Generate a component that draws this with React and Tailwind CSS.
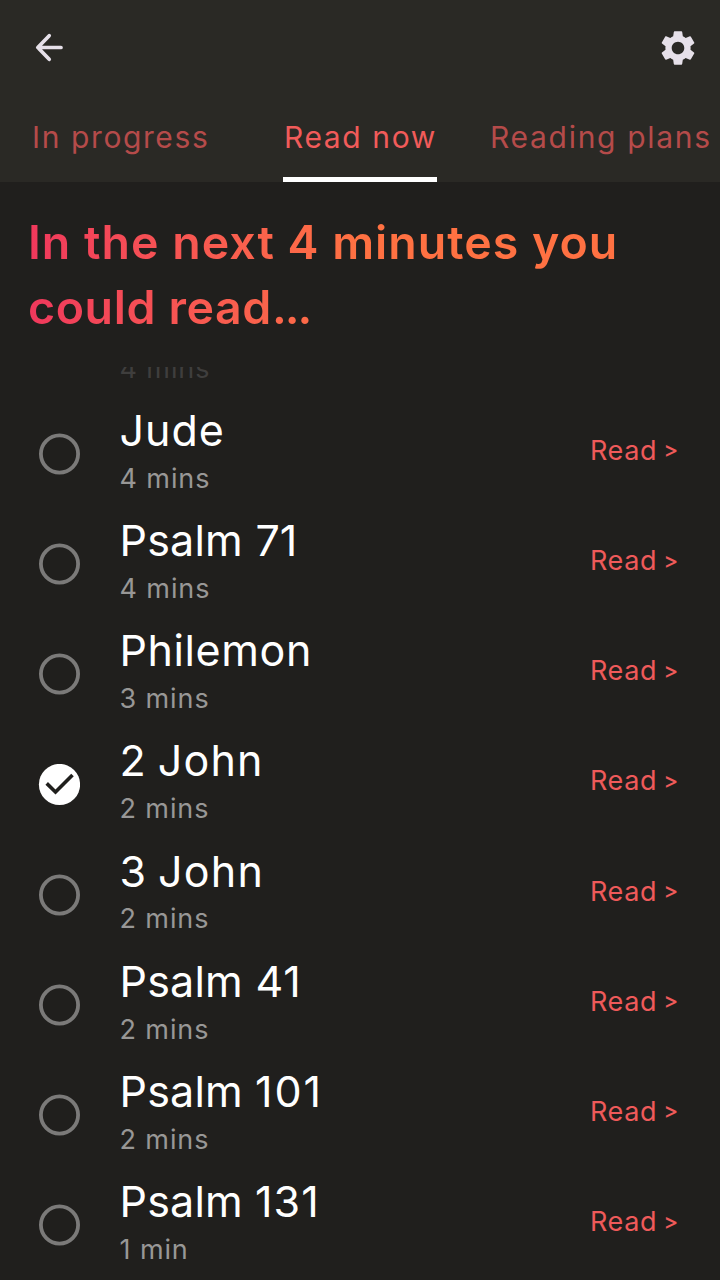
import { MdSettings } from "react-icons/md";

const PSALM = "tracking-[0.2px]";
const JOHN = "ml-[12px] tracking-[1.2px]";

const items = [
  { words: [["Jude", "tracking-[1px]"]], mins: "4 mins" },
  { words: [["Psalm", PSALM], ["71", "ml-[12.5px]"]], mins: "4 mins" },
  { words: [["Philemon", "tracking-[0.6px]"]], mins: "3 mins" },
  { words: [["2", ""], ["John", JOHN]], mins: "2 mins", done: true },
  { words: [["3", ""], ["John", JOHN]], mins: "2 mins" },
  { words: [["Psalm", PSALM], ["41", "ml-[12.5px] tracking-[1px]"]], mins: "2 mins" },
  { words: [["Psalm", PSALM], ["101", "ml-[12px] tracking-[2px]"]], mins: "2 mins" },
  { words: [["Psalm", PSALM], ["131", "ml-[12px] tracking-[1.2px]"]], mins: "1 min" },
];

function Check({ done }) {
  return (
    <svg width="42" height="42" viewBox="0 0 42 42" className="shrink-0">
      {done ? (
        <>
          <circle cx="21.5" cy="20.5" r="20.6" fill="#fff" />
          <path d="M8.7 19.4 L17.5 28 L34.5 11" fill="none" stroke="#201f1d" strokeWidth="3.6" />
        </>
      ) : (
        <circle cx="21.5" cy="21" r="18.6" fill="none" stroke="#7b7a79" strokeWidth="3.8" />
      )}
    </svg>
  );
}

function Row({ words, mins, done }) {
  return (
    <li className="flex h-[110.2px] items-center pl-[38px] pr-[41px]">
      <Check done={done} />
      <div className="ml-[39.5px] flex h-full flex-1 flex-col pt-[4.8px]">
        <div className="flex text-[43px] leading-[52px] text-white">
          {words.map(([text, cls]) => (
            <span key={text} className={cls}>{text}</span>
          ))}
        </div>
        <span className="mt-[6.9px] text-[27px] leading-8 tracking-[0.9px] text-[#989796]">{mins}</span>
      </div>
      <button className="mb-[6.5px] flex w-[89px] items-center text-[27px] leading-8 text-[#ef5a5a]">
        <span className="tracking-[0.6px]">Read</span>
        <span className="mb-[3px] ml-[6.5px] text-[22px] font-medium">&gt;</span>
      </button>
    </li>
  );
}

export default function App() {
  return (
    <div className="flex h-[1280px] w-[720px] flex-col overflow-hidden bg-[#201f1d] font-['Inter',sans-serif]">
      <header className="flex h-[182px] shrink-0 flex-col bg-[#2a2925]">
        <div className="flex h-[95px] items-center justify-between pl-[34px] pr-[21px]">
          <svg width="30" height="30" viewBox="0 0 30 30" fill="none" stroke="#e6e0e9" strokeWidth="3.7" strokeLinecap="round" strokeLinejoin="round">
            <path d="M27 14.5H4M15.2 2.7L3.8 14.5L15.2 26.3" />
          </svg>
          <MdSettings size={42} color="#e6e0e9" />
        </div>
        <nav className="flex h-[87px] whitespace-nowrap text-[30px] leading-[36px] tracking-[1.6px] text-[#b54b4a]">
          <div className="w-[283px] pl-[32px] pt-[23.5px]">In progress</div>
          <div className="w-[154px] border-b-[5px] border-white pl-px pt-[23.5px] text-[#f15b5a]">Read now</div>
          <div className="pl-[53px] pt-[23.5px] tracking-[1.7px]">Reading plans</div>
        </nav>
      </header>
      <h1 className="h-[185px] shrink-0 whitespace-nowrap pt-[28px] text-[46.5px] font-semibold leading-[65px]">
        <span className="ml-[28px] block w-[600px] bg-linear-to-r from-[#f0385c] to-[#ff7142] to-[55%] bg-clip-text tracking-[1px] text-transparent">
          In the next 4 minutes you
          <br />
          <span className="tracking-[0.6px]">could read<span className="tracking-[-2px]">...</span></span>
        </span>
      </h1>
      <div className="h-[32px] shrink-0 overflow-hidden pl-[119.5px]">
        <span className="-mt-[14px] block text-[27px] leading-8 tracking-[0.9px] text-[#3f3e3d]">4 mins</span>
      </div>
      <ul className="flex flex-col">
        {items.map((item) => (
          <Row key={item.words.map((w) => w[0]).join(" ")} {...item} />
        ))}
      </ul>
    </div>
  );
}
